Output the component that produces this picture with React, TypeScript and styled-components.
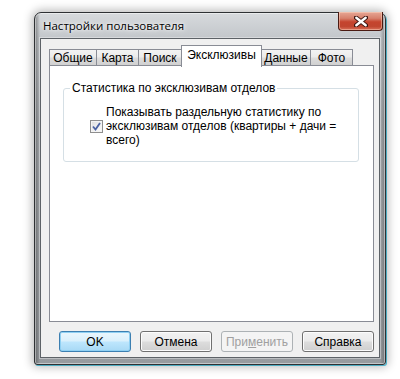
import styled, { createGlobalStyle } from "styled-components";

const GlobalStyle = createGlobalStyle`
    html, body {
        margin: 0;
        padding: 0;
        background: #ffffff;
        width: 400px;
        height: 379px;
        overflow: hidden;
    }
    * {
        box-sizing: border-box;
    }
`

const UI_FONT = `"Liberation Sans", Arial, sans-serif`

const Stage = styled.div`
    padding: 12px 0 0 34px;
    font-family: ${UI_FONT};
    font-size: 12px;
    color: #000;
`

const Window = styled.div`
    width: 352px;
    height: 353px;
    display: flex;
    flex-direction: column;
    border: 1px solid #2e3134;
    border-radius: 7px 7px 3px 3px;
    background:
        linear-gradient(90deg, rgba(40, 40, 40, 0.45) 0, rgba(40, 40, 40, 0) 5px, rgba(40, 40, 40, 0) 345px, rgba(40, 40, 40, 0.35) 100%),
        linear-gradient(180deg, #d7dadd 0%, #c3c7cb 7%, #a9adb1 30%, #979b9f 100%);
    box-shadow:
        inset 0 0 0 1px rgba(255, 255, 255, 0.45),
        0 0 10px 2px rgba(0, 0, 0, 0.28),
        1px 1px 0 #5fd0ea;
`

const TitleBar = styled.div`
    height: 25px;
    display: flex;
    align-items: flex-start;
    padding-left: 8px;
`

const Title = styled.span`
    font-family: "Open Sans", "Noto Sans", sans-serif;
    font-size: 11.5px;
    line-height: 16px;
    padding-top: 5px;
    color: #000;
    text-shadow: 0 0 6px rgba(255, 255, 255, 0.95), 0 0 3px rgba(255, 255, 255, 0.9);
`

const CloseButton = styled.div`
    margin-left: auto;
    margin-right: 2px;
    margin-top: -1px;
    width: 45px;
    height: 19px;
    display: flex;
    align-items: center;
    justify-content: center;
    border: 1px solid #4a1a12;
    border-top: none;
    border-radius: 0 0 4px 4px;
    background: linear-gradient(180deg, #e7a796 0%, #d7816d 35%, #c5442e 55%, #c0452f 80%, #d9715a 100%);
    box-shadow: inset 0 0 0 1px rgba(255, 220, 200, 0.45);
`

const Client = styled.div`
    flex: 1;
    margin: 0 5px 6px 5px;
    display: flex;
    flex-direction: column;
    padding: 6px 5px 5px 8px;
    background: #f0f0f0;
    border: 1px solid #5d6267;
    box-shadow: 0 0 0 1px rgba(255, 255, 255, 0.35);
`

const TabRow = styled.div`
    height: 21px;
    display: flex;
    align-items: flex-end;
`

interface TabProps {
    readonly $width: number;
    readonly $active?: boolean;
}

const Tab = styled.div<TabProps>`
    width: ${p => p.$width}px;
    height: ${p => p.$active ? 22 : 17}px;
    margin-left: -1px;
    margin-bottom: ${p => p.$active ? -1 : 0}px;
    &:first-child {
        margin-left: 0;
    }
    position: relative;
    z-index: ${p => p.$active ? 2 : 1};
    border: 1px solid #898c95;
    border-bottom: ${p => p.$active ? "none" : "1px solid #898c95"};
    background: ${p => p.$active
        ? "#ffffff"
        : "linear-gradient(180deg, #f3f3f3 0%, #ebebeb 45%, #dcdcdc 55%, #d0d0d0 100%)"};
    display: flex;
    justify-content: center;
    padding-top: ${p => p.$active ? 2 : 1}px;
    line-height: 14px;
    white-space: nowrap;
`

const Panel = styled.div`
    flex: 1;
    margin-top: -1px;
    background: #ffffff;
    border: 1px solid #898c95;
    display: flex;
    flex-direction: column;
`

const Group = styled.fieldset`
    margin: 15px 14px 0 13px;
    padding: 0 0 14px 0;
    border: 1px solid #d5dfe5;
    border-radius: 3px;
    min-width: 0;
`

const GroupTitle = styled.legend`
    margin-left: 6px;
    padding: 0 2px;
    line-height: 14px;
`

const CheckRow = styled.label`
    margin-top: 10px;
    padding-left: 26px;
    display: flex;
    align-items: center;
    gap: 3px;
`

const CheckBox = styled.span`
    width: 13px;
    height: 13px;
    flex: none;
    border: 1px solid #8f8f8f;
    background: linear-gradient(135deg, #dcdcdc 0%, #f2f2f2 60%, #fbfbfb 100%);
    box-shadow: inset 0 0 0 1px #f4f4f4;
    display: flex;
    align-items: center;
    justify-content: center;
`

const CheckText = styled.span`
    line-height: 14px;
`

const Footer = styled.div`
    display: flex;
    justify-content: flex-end;
    gap: 9px;
    padding-top: 9px;
`

interface ButtonProps {
    readonly $default?: boolean;
    readonly $disabled?: boolean;
}

const Button = styled.div<ButtonProps>`
    width: 72px;
    height: 21px;
    display: flex;
    align-items: center;
    justify-content: center;
    border-radius: 3px;
    border: 1px solid ${p => p.$default ? "#3c7fb1" : p.$disabled ? "#adb2b5" : "#707070"};
    background: ${p => p.$default
        ? "linear-gradient(180deg, #eaf6fd 0%, #d9f0fc 48%, #bee6fd 52%, #a7d9f5 100%)"
        : p.$disabled
            ? "#f4f4f4"
            : "linear-gradient(180deg, #f2f2f2 0%, #ebebeb 48%, #dddddd 52%, #cfcfcf 100%)"};
    box-shadow: inset 0 0 0 1px ${p => p.$default ? "#8fd0f3" : p.$disabled ? "#f4f4f4" : "#fcfcfc"};
    color: ${p => p.$disabled ? "#a0a0a0" : "#000"};
    font-size: 12px;
    u {
        text-decoration: underline;
    }
`

const CloseGlyph = () => (
    <svg width="14" height="11" viewBox="0 0 14 11">
        <path
            d="M2 1.5 L12 9.5 M12 1.5 L2 9.5"
            stroke="#3a1510"
            strokeWidth="4.2"
            strokeLinecap="round"
            fill="none"
        />
        <path
            d="M2.3 1.8 L11.7 9.2 M11.7 1.8 L2.3 9.2"
            stroke="#ffffff"
            strokeWidth="2.4"
            strokeLinecap="round"
            fill="none"
        />
    </svg>
)

const CheckMark = () => (
    <svg width="9" height="9" viewBox="0 0 9 9">
        <path d="M1 4.5 L3.5 7.5 L8 1" stroke="#4b62a3" strokeWidth="1.8" fill="none" />
    </svg>
)

const tabs = [
    { label: "Общие", width: 48 },
    { label: "Карта", width: 43 },
    { label: "Поиск", width: 44 },
    { label: "Эксклюзивы", width: 81, active: true },
    { label: "Данные", width: 50 },
    { label: "Фото", width: 43 },
]

export default function App() {
    return (
        <>
            <GlobalStyle />
            <Stage>
                <Window>
                    <TitleBar>
                        <Title>Настройки пользователя</Title>
                        <CloseButton>
                            <CloseGlyph />
                        </CloseButton>
                    </TitleBar>
                    <Client>
                        <TabRow>
                            {tabs.map(t => (
                                <Tab key={t.label} $width={t.width} $active={t.active}>{t.label}</Tab>
                            ))}
                        </TabRow>
                        <Panel>
                            <Group>
                                <GroupTitle>Статистика по эксклюзивам отделов</GroupTitle>
                                <CheckRow>
                                    <CheckBox>
                                        <CheckMark />
                                    </CheckBox>
                                    <CheckText>
                                        Показывать раздельную статистику по<br />
                                        эксклюзивам отделов (квартиры + дачи =<br />
                                        всего)
                                    </CheckText>
                                </CheckRow>
                            </Group>
                        </Panel>
                        <Footer>
                            <Button $default>OK</Button>
                            <Button>Отмена</Button>
                            <Button $disabled>При<u>м</u>енить</Button>
                            <Button>Справка</Button>
                        </Footer>
                    </Client>
                </Window>
            </Stage>
        </>
    )
}
